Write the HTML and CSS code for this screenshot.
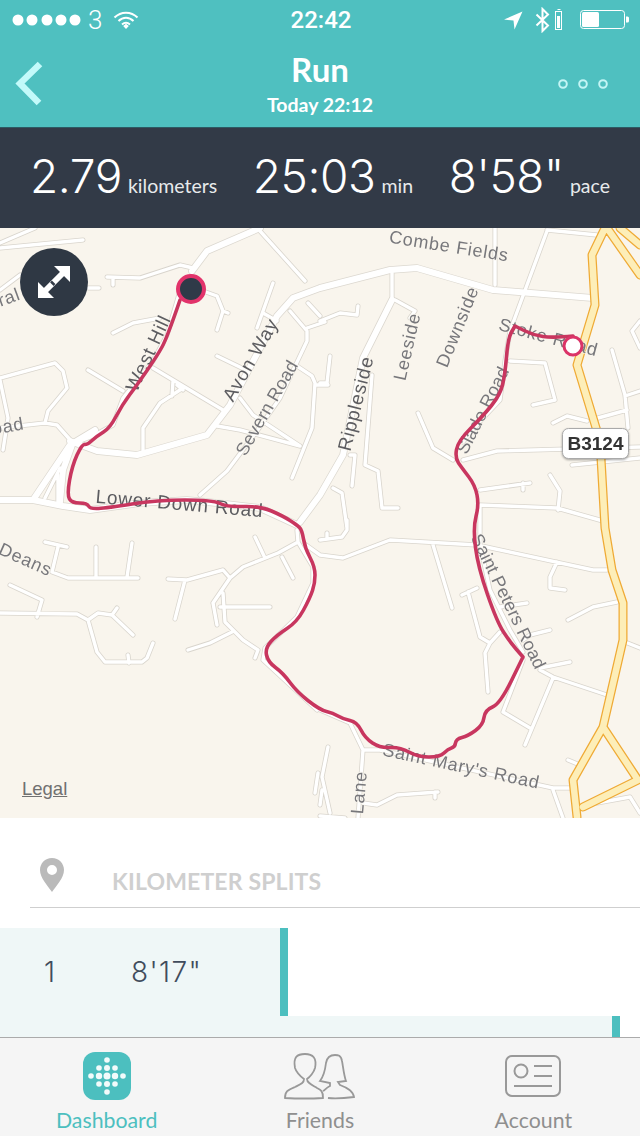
FILE: index.html
```html
<!DOCTYPE html>
<html lang="en">
<head>
<meta charset="utf-8">
<title>Run</title>
<link rel="stylesheet" href="styles.css">
</head>
<body>
<div class="app">
  <header class="top">
    <div class="status">
      <div class="status-left">
        <svg class="signal" width="70" height="14" viewBox="0 0 70 14"><circle cx="6" cy="7" r="5.5"/><circle cx="20" cy="7" r="5.5"/><circle cx="35" cy="7" r="5.5"/><circle cx="49" cy="7" r="5.5"/><circle cx="63" cy="7" r="5.5"/></svg>
        <span class="carrier">3</span>
        <svg class="wifi" width="26" height="20" viewBox="0 0 26 20"><path d="M1.5 7.5C8 1 18 1 24.5 7.500M5.500 11C10 6.500 16 6.500 20.500 11M9 14.500C11.500 12.300 14.500 12.300 17 14.500" fill="none" stroke="#fff" stroke-width="2"/><path d="M10.200 16L13 13.800L15.800 16L13 19Z" fill="#fff"/></svg>
      </div>
      <div class="clock">22:42</div>
      <div class="status-right">
        <svg class="arrow" width="20" height="20" viewBox="0 0 20 20"><path d="M1 9.500L19.500 1.500L11.500 19.500L10.500 10.500Z" fill="#fff"/></svg>
        <svg width="15" height="26" viewBox="0 0 15 26"><path d="M1.500 7.500L13 18.500L7.500 24V2L13 7.500L1.500 18.500" fill="none" stroke="#fff" stroke-width="2"/></svg>
        <svg class="low" width="8" height="22" viewBox="0 0 8 22"><path d="M2.500 .5H5.500" stroke="#fff"/><rect x=".5" y="2.500" width="6" height="18" fill="none" stroke="#fff"/><rect x="2" y="7" width="3" height="12" fill="#fff"/></svg>
        <svg class="battery" width="50" height="20" viewBox="0 0 50 20"><rect x=".5" y=".5" width="44" height="18" rx="3" fill="none" stroke="#fff"/><rect x="2" y="2" width="17" height="15" rx="1.500" fill="#fff"/><path d="M46 6.500H47.500Q49 6.500 49 8V11Q49 12.500 47.500 12.500H46Z" fill="#fff"/></svg>
      </div>
    </div>
    <nav class="navbar">
      <div class="nav-side">
        <svg width="32" height="46" viewBox="0 0 32 46"><path d="M26 3L6 22.500L25 42" fill="none" stroke="#c3fafa" stroke-width="6.500"/></svg>
      </div>
      <div class="nav-title">
        <h1>Run</h1>
        <p>Today 22:12</p>
      </div>
      <div class="nav-side nav-more">
        <svg width="50" height="10" viewBox="0 0 50 10"><g fill="none" stroke="#c3f5f5" stroke-width="2"><circle cx="5" cy="5" r="3.800"/><circle cx="25" cy="5" r="3.800"/><circle cx="45" cy="5" r="3.800"/></g></svg>
      </div>
    </nav>
  </header>

  <section class="stats">
    <div class="stat"><span class="num">2.79</span><span class="unit">kilometers</span></div>
    <div class="stat"><span class="num">25:03</span><span class="unit">min</span></div>
    <div class="stat"><span class="num">8'58"</span><span class="unit">pace</span></div>
  </section>

  <section class="map">
    <svg class="map-svg" width="640" height="590" viewBox="0 228 640 590">
      <defs>
        <path id="thin" d="M0 243L35 228M0 248L83 240M107 277L140 278L180 265L193 268M113 278V285M0 290L20 275M88 288H99M113 333L133 323L160 318M180 291L167 335L153 361L123 398L113 425L93 436L70 445M203 291L217 296L223 311L217 330M223 311L228 313M260 231L305 281M273 283L257 328M263 313L277 321M290 311L307 331L307 341L280 398L257 431L227 471L200 495M308 303L320 316M307 328L325 322M217 356L248 371M297 366L312 376L315 383L312 428L292 478M315 385H328L327 383M240 398L253 415L300 446M217 426L240 430L300 446M88 370L123 391M153 368L223 410M173 381L172 396M177 385L183 390M183 388L160 403L143 428V450M0 378L55 363L63 371L67 388L48 411L45 423M0 380L8 418L3 450M0 428L45 423L57 425L73 443M60 468L45 498M58 475V503M495 228V285M597 235L547 230M547 231L527 285L510 331L505 361L500 400L483 418L463 442M392 273V300M395 300L415 311L410 318M320 321L340 313L357 315L358 306M330 356L327 383H320M372 375L365 465L378 471L382 508H398M350 455H355L352 486M333 488L342 493L347 528M418 413L433 448L453 460M463 460L497 451L640 447M510 361L545 363L555 400L533 405M553 423L567 416L587 421M598 418L627 410M612 350L625 395L628 428M625 396L640 391M572 465L640 458M480 490L530 483M523 483V490M550 475L560 491L558 510M480 505L557 508L603 521M640 321L632 331L640 348M306 545L320 555L343 558L390 540L477 545L593 570H607M433 545L452 608M480 505V545L490 590L510 630L523 652M462 595L477 588M468 592L480 637L490 643L485 653L488 692M490 643L500 632M500 607L527 603M523 640L530 635L550 630M540 668L570 662M540 670L553 677L607 695M553 678L525 745M523 660L503 712L530 728M557 562L550 577V588L565 590M568 620L593 607L617 602M625 642L640 648M568 760L580 765M320 710L350 723L363 750H380L553 788H570M553 790L563 818M363 750L358 818M328 747L322 777L330 813M322 790L320 805M363 803L377 805L397 795L438 792M435 792V798M320 816L345 818M320 540L342 537L347 530V520M327 533V538M597 803L630 797L640 813M45 542L67 547M58 547L52 572L68 578H138M96 547V578M132 543L127 577M10 585L42 600L37 617M0 613L77 614L88 620L98 613L112 615L133 635M112 615L117 608M88 620L97 652L105 662H142L147 658L153 643M128 655L129 663M168 579L187 580L223 570L230 578M185 580L175 619M213 603L230 578L243 567L278 553L298 542M255 537L265 558M282 557L293 578M220 607H270M223 593L225 622L243 640L258 650L255 658M213 603L217 625M188 650L210 643L232 632M298 542L313 567V583L297 617L265 648L263 660L317 710M297 530L298 542M318 773L315 793"/>
        <path id="major" d="M260 228L207 251L192 271M320 288L293 298L277 316L230 405L207 435L137 455L97 451L70 441M593 298L493 290L417 268L390 270L320 288M392 300L363 358L343 455L320 495L300 522M0 500H33L63 506L90 510L140 503L187 500L217 503L260 508L297 525M33 500L70 445L95 430M60 502L63 470L72 445"/>
        <path id="yellow" d="M605 228L592 255L595 305L577 365L600 441L605 528L612 570L623 603L623 640L603 727L573 780L577 817M603 727L638 780L583 807M607 228L640 275M620 228L640 245"/>
      </defs>
      <rect x="0" y="228" width="640" height="590" class="land"/>
      <use href="#thin" class="thin-case"/>
      <use href="#major" class="major-case"/>
      <use href="#thin" class="thin-fill"/>
      <use href="#major" class="major-fill"/>
      <use href="#yellow" class="yellow-case"/>
      <use href="#yellow" class="yellow-fill"/>

      <g class="labels">
        <text transform="translate(448 252) rotate(9)">Combe Fields</text>
        <text transform="translate(463 329) rotate(-68)">Downside</text>
        <text transform="translate(413 348) rotate(-77)">Leeside</text>
        <text class="strong" transform="translate(362 405) rotate(-76)">Rippleside</text>
        <text class="strong" transform="translate(256 363) rotate(-60)">Avon Way</text>
        <text class="strong" transform="translate(154 356) rotate(-65)">West Hill</text>
        <text class="tight" transform="translate(272 411) rotate(-60)">Severn Road</text>
        <text class="strong" transform="translate(179 510) rotate(5)">Lower Down Road</text>
        <text transform="translate(23 565) rotate(24)">Deans</text>
        <text transform="translate(9 432) rotate(-10)">oad</text>
        <text transform="translate(11 303) rotate(-20)">ral</text>
        <text transform="translate(547 343) rotate(15)">Stoke Road</text>
        <text class="tight" transform="translate(488 413) rotate(-63)">Slade Road</text>
        <text class="tight" transform="translate(503 604) rotate(64)">Saint Peters Road</text>
        <text transform="translate(460 772) rotate(12)">Saint Mary's Road</text>
        <text transform="translate(365 793) rotate(-85)">Lane</text>
      </g>

      <path class="route" d="M180 300Q167 338 162 347Q157 356 147 370.500Q137 385 129.500 395Q122 405 116 416.500Q110 428 103.500 432Q97 436 92 440.500Q87 445 84.500 444.500Q82 444 77 455Q72 466 69.500 480.500Q67 495 69.500 499Q72 503 79.500 503Q87 503 88.500 506Q90 509 98.500 508.500Q107 508 132 504Q157 500 185 500Q213 500 220 503.500Q227 507 243.500 506.500Q260 506 271.500 511Q283 516 290 520.500Q297 525 299.500 527.500Q302 530 303.500 539Q305 548 310 557.500Q315 567 315 575Q315 583 312.500 590.500Q310 598 303.500 610Q297 622 287 628.500Q277 635 271 641.500Q265 648 266.500 655Q268 662 275.500 667.500Q283 673 290 682.500Q297 692 308.500 701Q320 710 326.500 711.500Q333 713 338 716Q343 719 350 720.500Q357 722 361 730Q365 738 372.500 743Q380 748 390 747.500Q400 747 409 752Q418 757 429 757Q440 757 444 753Q448 749 451.500 748Q455 747 455.500 743Q456 739 462 737.500Q468 736 475.500 730.500Q483 725 484 717.500Q485 710 492.500 707Q500 704 511.500 680.500L523 657L516.500 649.500Q510 642 503.500 632Q497 622 487.500 594.500Q478 567 475.500 547.500Q473 528 476 516.500Q479 505 477 495Q475 485 468.500 476.500Q462 468 458.500 463Q455 458 456.500 449.500Q458 441 470.500 428.500Q483 416 491.500 405.500Q500 395 502.500 385Q505 375 506.500 356.500Q508 338 511.500 332L515 326L524 330.500Q533 335 543 336.500Q553 338 573 336"/>
      <circle class="start" cx="573" cy="346" r="9"/>
      <circle class="end" cx="191" cy="289" r="13"/>

      <g class="shield">
        <rect x="562.500" y="428.500" width="66" height="30" rx="6"/>
        <text x="595.500" y="450">B3124</text>
      </g>
    </svg>
    <button class="expand" type="button" aria-label="Expand map">
      <svg width="36" height="36" viewBox="0 0 36 36"><path d="M8 28L28 8" stroke="#fff" stroke-width="6"/><path d="M18 2H34V18Z" fill="#fff"/><path d="M2 18V34H18Z" fill="#fff"/><path d="M15 17.500l3.500 3.500" stroke="#323a47" stroke-width="2.500"/></svg>
    </button>
    <a class="legal" href="#">Legal</a>
  </section>

  <main class="splits">
    <div class="splits-head">
      <svg width="24" height="34" viewBox="0 0 24 34"><path fill-rule="evenodd" d="M12 0C5 0 0 5.500 0 12C0 20 8 28 12 34C16 28 24 20 24 12C24 5.500 19 0 12 0ZM12 7A5 5 0 1 1 12 17A5 5 0 1 1 12 7Z" fill="#bababa"/></svg>
      <h2>KILOMETER SPLITS</h2>
    </div>
    <div class="split-list">
      <div class="split" style="width:288px"><span class="split-n">1</span><span class="split-t">8'17"</span></div>
      <div class="split" style="width:620px"></div>
    </div>
  </main>

  <footer class="tabs">
    <a class="tab active" href="#">
      <svg width="48" height="48" viewBox="0 0 48 48"><rect width="48" height="48" rx="12" fill="#4cbfbf"/><g fill="#f2fbfb"><circle cx="24" cy="8" r="2.800"/><circle cx="16" cy="16" r="2.800"/><circle cx="24" cy="16" r="3"/><circle cx="32" cy="16" r="2.800"/><circle cx="8" cy="24" r="2.800"/><circle cx="16" cy="24" r="3.200"/><circle cx="24" cy="24" r="3.500"/><circle cx="32" cy="24" r="3.200"/><circle cx="40" cy="24" r="2.800"/><circle cx="16" cy="32" r="2.800"/><circle cx="24" cy="32" r="3"/><circle cx="32" cy="32" r="2.800"/><circle cx="24" cy="40" r="2.800"/></g></svg>
      <span>Dashboard</span>
    </a>
    <a class="tab" href="#">
      <svg width="72" height="48" viewBox="14 11 72 48"><g fill="none" stroke="#999" stroke-width="1.800"><path d="M15 57C15 50 18 49 25 46C31 43 34 42 34 38C30 35 26 30 25 27C23 16 27 13 35 13C43 13 47 17 45 27C44 31 40 36 37 38C37 42 42 44 47 47C51 49 53 50 53 57Q35 58 15 57Z"/><path d="M58 57C68 58 76 57 84 56C83 50 78 47 70 44L68 41L76 40C74 35 73 25 72 20C71 14 68 14 65 14C60 14 57 16 56 22C55 30 54 35 50 40L60 42L60 45C56 47 55 49 53 50"/></g></svg>
      <span>Friends</span>
    </a>
    <a class="tab" href="#">
      <svg width="56" height="48" viewBox="0 -3 56 48"><g fill="none" stroke="#999" stroke-width="2"><rect x="1" y="1" width="54" height="40" rx="6"/><circle cx="16" cy="16" r="6.500"/><path d="M29 11H47M29 21H47M9 31H47"/></g></svg>
      <span>Account</span>
    </a>
  </footer>
</div>
</body>
</html>
```

FILE: styles.css
```css
* { box-sizing: border-box; }
html, body { margin: 0; padding: 0; }
body { background: #fff; font-family: "Lato", "Open Sans", sans-serif; }
a { text-decoration: none; color: inherit; }
h1, h2, p { margin: 0; }

.app { width: 640px; height: 1136px; display: flex; flex-direction: column; overflow: hidden; }

.top { height: 128px; background: #4fc0c0; color: #fff; border-bottom: 1px solid #2c5a63; flex: none; }
.status { height: 40px; display: grid; grid-template-columns: 1fr auto 1fr; align-items: center; padding: 0 10px 0 12px; }
.status-left { display: flex; align-items: center; gap: 6px; }
.signal { fill: #fff; }
.carrier { font: 300 26px "Roboto", sans-serif; width: 15px; margin-left: 0; }
.wifi { margin-left: 4px; }
.clock { font: 500 24px "Roboto", sans-serif; }
.status-right { display: flex; justify-content: flex-end; align-items: center; gap: 5px; }
.status-right .arrow { margin-right: 7px; }
.status-right .battery { margin-left: 12px; }

.navbar { height: 87px; display: grid; grid-template-columns: 1fr auto 1fr; align-items: center; padding: 0 14px; }
.nav-side { display: flex; align-items: center; }
.nav-more { justify-content: flex-end; padding-right: 18px; }
.nav-title { text-align: center; margin-top: 3px; }
.nav-title h1 { font-size: 33px; font-weight: 700; line-height: 38px; }
.nav-title p { font-size: 19.500px; font-weight: 700; line-height: 30px; margin-top: 2px; }

.stats { height: 100px; background: #323a47; color: #fff; flex: none; display: flex; align-items: baseline; padding: 0 30px 0 30px; justify-content: space-between; line-height: 96px; }
.stat { display: flex; align-items: baseline; gap: 6px; }
.num { font-family: "Inter", sans-serif; font-size: 46px; font-weight: 300; letter-spacing: -.4px; }
.unit { font-size: 19.500px; font-weight: 400; color: #e8eaec; }

.map { position: relative; height: 590px; flex: none; background: #f9f5ed; overflow: hidden; }
.map-svg { display: block; filter: blur(.4px); }
.land { fill: #f9f5ed; }
.map-svg use { fill: none; stroke-linejoin: round; stroke-linecap: round; }
.thin-case { stroke: #d9d5cd; stroke-width: 5; }
.thin-fill { stroke: #fff; stroke-width: 3.4; }
.major-case { stroke: #dcd8d0; stroke-width: 7.5; }
.major-fill { stroke: #fff; stroke-width: 6; }
.yellow-case { stroke: #efaa35; stroke-width: 9; }
.yellow-fill { stroke: #fdeeb8; stroke-width: 6.5; }

.labels text { font: 18px "Liberation Sans", sans-serif; letter-spacing: .8px; fill: #77777b; text-anchor: middle; stroke: #f9f5ed; stroke-opacity: .6; stroke-width: 2px; paint-order: stroke; }
.labels .strong { fill: #5c5c60; font-size: 19px; }
.labels .tight { letter-spacing: .1px; }

.route { fill: none; stroke: #c8365f; stroke-width: 3.6; stroke-linejoin: round; stroke-linecap: round; }
.start { fill: #fff; stroke: #db3468; stroke-width: 3; }
.end { fill: #2f3a48; stroke: #e2336b; stroke-width: 4; }

.shield rect { fill: #fff; stroke: #aaa; stroke-width: 1; filter: drop-shadow(0 1px 1px rgba(0, 0, 0, .35)); }
.shield text { font: 700 19px "Liberation Sans", sans-serif; fill: #333; text-anchor: middle; }

.expand { position: absolute; left: 20px; top: 20px; width: 68px; height: 68px; border: 0; padding: 0; border-radius: 50%; background: #2f3844; display: flex; align-items: center; justify-content: center; }
.legal { position: absolute; left: 22px; bottom: 18px; font: 18.500px "Liberation Sans", sans-serif; color: #707070; text-decoration: underline; }

.splits { flex: 1; min-height: 0; overflow: hidden; background: #fff; }
.splits-head { height: 90px; margin-left: 30px; padding: 40px 0 0 10px; display: flex; align-items: flex-start; gap: 48px; border-bottom: 1px solid #cfcfcf; }
.splits-head h2 { font-size: 23px; font-weight: 700; letter-spacing: .15px; color: #cfcfcf; line-height: 46px; margin-top: 0; }
.split-list { padding-top: 20px; }
.split { height: 88px; background: #eff7f7; border-right: 8px solid #4cbfbf; display: flex; align-items: center; font-family: "Inter", sans-serif; font-weight: 300; font-size: 28px; letter-spacing: 1.4px; color: #414c5c; }
.split-n { margin-left: 44px; width: 87px; }

.tabs { height: 99px; flex: none; background: #f5f5f5; border-top: 1px solid #ababab; display: grid; grid-template-columns: repeat(3, 1fr); }
.tab { display: flex; flex-direction: column; align-items: center; color: #8f8f8f; font-size: 21.300px; padding-top: 14px; }
.tab svg { display: block; margin-bottom: 7px; }
.tab.active { color: #4cbfbf; }
```
